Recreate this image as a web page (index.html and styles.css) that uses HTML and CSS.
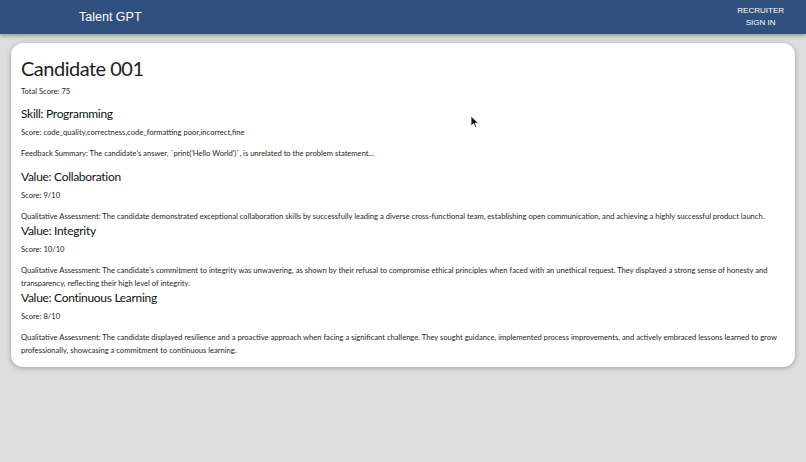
FILE: index.html
```html
<!DOCTYPE html>
<html lang="en">
<head>
    <meta charset="UTF-8">
    <title>Talent GPT</title>
    <link rel="stylesheet" href="styles.css">
</head>
<body>
<header class="topBar">
    <div class="brand">Talent GPT</div>
    <nav class="navLinks">
        <a href="#">Recruiter</a>
        <a href="#">Sign in</a>
    </nav>
</header>
<main class="page">
    <div class="candidateCard">
        <h1 class="candidateName">Candidate 001</h1>
        <p class="totalScore">Total Score: 75</p>

        <div class="section skillSection">
            <h2>Skill: Programming</h2>
            <p class="score">Score: code_quality,correctness,code_formatting poor,incorrect,fine</p>
            <p class="summary">Feedback Summary: The candidate's answer, `print('Hello World')`, is unrelated to the problem statement...</p>
        </div>

        <div class="section">
            <h2>Value: Collaboration</h2>
            <p class="score">Score: 9/10</p>
            <p class="summary">Qualitative Assessment: The candidate demonstrated exceptional collaboration skills by successfully leading a diverse cross-functional team, establishing open communication, and achieving a highly successful product launch.</p>
        </div>
        <div class="section">
            <h2>Value: Integrity</h2>
            <p class="score">Score: 10/10</p>
            <p class="summary">Qualitative Assessment: The candidate's commitment to integrity was unwavering, as shown by their refusal to compromise ethical principles when faced with an unethical request. They displayed a strong sense of honesty and transparency, reflecting their high level of integrity.</p>
        </div>
        <div class="section">
            <h2>Value: Continuous Learning</h2>
            <p class="score">Score: 8/10</p>
            <p class="summary">Qualitative Assessment: The candidate displayed resilience and a proactive approach when facing a significant challenge. They sought guidance, implemented process improvements, and actively embraced lessons learned to grow professionally, showcasing a commitment to continuous learning.</p>
        </div>
    </div>
</main>
<svg class="pointer" width="10" height="14" viewBox="0 0 10 14">
    <path d="M1 1 L1 11 L3.5 8.6 L5.4 12.6 L6.8 12 L5 8.2 L8.4 8.2 Z" fill="#111" stroke="#fff" stroke-width="0.8"/>
</svg>
</body>
</html>
```

FILE: styles.css
```css
* {
    box-sizing: border-box;
}

html, body {
    height: 100%;
}

body {
    margin: 0;
    background-color: #dedede;
    font-family: Lato, "Open Sans", sans-serif;
    color: #1e1e1e;
}

.topBar {
    height: 34px;
    background-color: #30507f;
    box-shadow: 0 2px 4px rgba(0, 0, 0, 0.3);
    display: flex;
    align-items: center;
    justify-content: space-between;
    padding: 0 22px 0 79px;
    color: #fff;
    font-family: "Liberation Sans", Arial, sans-serif;
}

.brand {
    font-size: 12.5px;
}

.navLinks {
    display: flex;
    flex-direction: column;
    align-items: center;
    gap: 2px;
    margin-top: -1px;
}

.navLinks a {
    color: #fff;
    text-decoration: none;
    text-transform: uppercase;
    font-size: 8px;
    line-height: 10px;
}

.page {
    padding: 9px 11px;
}

.candidateCard {
    background-color: #fff;
    border-radius: 12px;
    box-shadow: 0 1px 5px rgba(0, 0, 0, 0.3);
    padding: 12px 10px 10px 10px;
}

.candidateName {
    margin: 0;
    font-size: 20px;
    font-weight: 400;
    letter-spacing: -0.5px;
    line-height: 26px;
}

.candidateCard p {
    margin: 0;
    font-size: 7.6px;
    line-height: 13px;
}

.candidateCard .totalScore {
    margin-top: 4px;
}

.section h2 {
    margin: 0;
    font-size: 12px;
    font-weight: 400;
    letter-spacing: -0.3px;
    line-height: 16px;
    color: #111;
}

.skillSection {
    margin-top: 8px;
}

.candidateCard .score {
    margin-top: 4px;
    margin-bottom: 8px;
}

.skillSection + .section {
    margin-top: 9px;
}

.pointer {
    position: absolute;
    left: 470px;
    top: 115px;
}
```
